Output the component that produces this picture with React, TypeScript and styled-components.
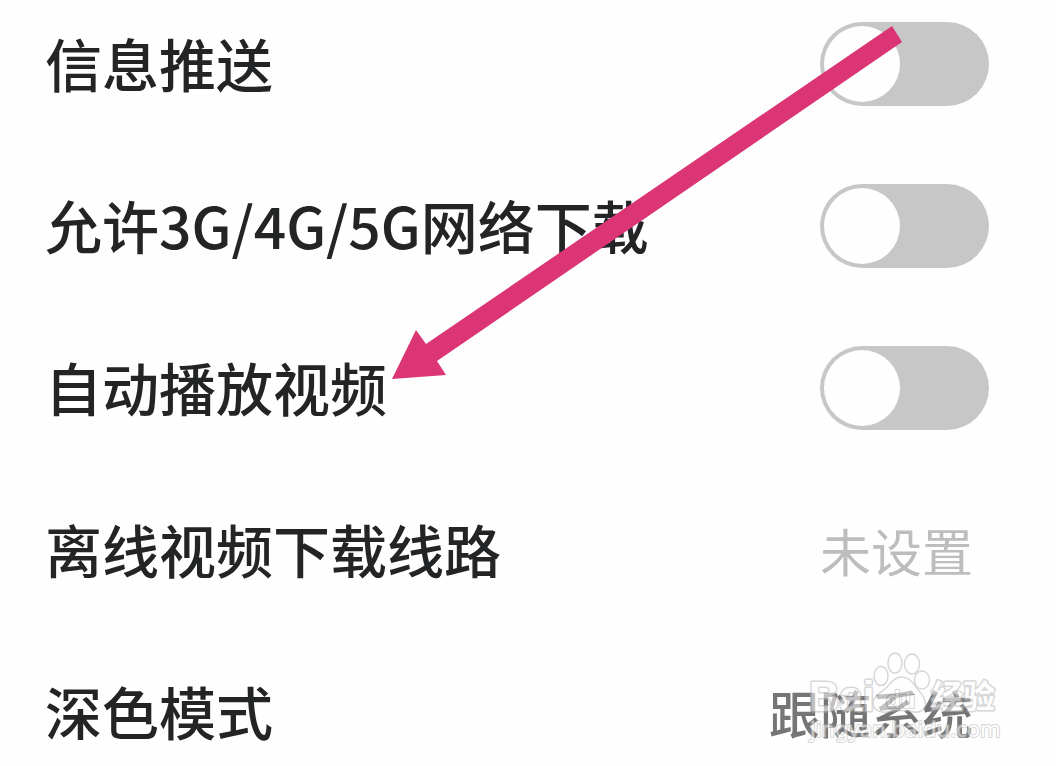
import React, { useState } from "react";
import styled, { createGlobalStyle } from "styled-components";

const GlobalStyle = createGlobalStyle`
  * { box-sizing: border-box; }
  body {
    margin: 0;
    background: #fefefe;
    font-family: "Noto Sans CJK SC", sans-serif;
  }
`;

const Page = styled.main`
  position: relative;
  overflow: hidden;
`;

const SettingsList = styled.div`
  display: flex;
  flex-direction: column;
  gap: 78px;
  padding: 22px 67px 12px 45px;
`;

const Row = styled.div`
  display: flex;
  align-items: center;
  justify-content: space-between;
  height: 84px;
`;

const Label = styled.label`
  padding-bottom: 4px;
  font-size: 57px;
  line-height: 80px;
  font-weight: 500;
  color: #222426;
  white-space: nowrap;
`;

const LinkRow = styled.button`
  display: flex;
  align-items: center;
  justify-content: space-between;
  width: 100%;
  height: 84px;
  padding: 0 16px 0 0;
  border: 0;
  background: none;
  font-family: inherit;
  cursor: pointer;
`;

const Title = styled(Label).attrs({ as: "span" })``;

const Value = styled.span<{ $muted?: boolean }>`
  font-size: 51px;
  line-height: 84px;
  font-weight: ${(p) => (p.$muted ? 400 : 500)};
  color: ${(p) => (p.$muted ? "#bdbdbd" : "#757575")};
  white-space: nowrap;
`;

const Switch = styled.input.attrs({ type: "checkbox", role: "switch" })`
  appearance: none;
  display: flex;
  flex: none;
  width: 169px;
  height: 84px;
  margin: 0;
  padding: 4px;
  border-radius: 42px;
  background: #c7c7c7;
  cursor: pointer;

  &::before {
    content: "";
    width: 76px;
    height: 76px;
    border-radius: 50%;
    background: #fefefe;
  }

  &:checked {
    justify-content: flex-end;
    background: #db3575;
  }
`;

const Arrow = styled.svg`
  position: absolute;
  top: 0;
  left: 0;
  pointer-events: none;
`;

const Watermark = styled.svg`
  position: absolute;
  right: 52px;
  bottom: 16px;
  pointer-events: none;
`;

const Brand = styled.text`
  paint-order: stroke;
  font-family: "Liberation Sans", "Noto Sans CJK SC", sans-serif;
  font-weight: 700;
`;

const Address = styled.text`
  paint-order: stroke;
  font-family: "Noto Sans", sans-serif;
  font-size: 22px;
`;

function ToggleRow({ id, label }: { id: string; label: string }) {
  const [on, setOn] = useState(false);
  return (
    <Row>
      <Label htmlFor={id}>{label}</Label>
      <Switch id={id} checked={on} onChange={() => setOn(!on)} />
    </Row>
  );
}

function ValueRow({ label, value, muted }: { label: string; value: string; muted?: boolean }) {
  return (
    <LinkRow type="button">
      <Title>{label}</Title>
      <Value $muted={muted}>{value}</Value>
    </LinkRow>
  );
}

export default function App() {
  return (
    <>
      <GlobalStyle />
      <Page>
        <SettingsList>
          <ToggleRow id="push" label="信息推送" />
          <ToggleRow id="mobile-data" label="允许3G/4G/5G网络下载" />
          <ToggleRow id="autoplay" label="自动播放视频" />
          <ValueRow label="离线视频下载线路" value="未设置" muted />
          <ValueRow label="深色模式" value="跟随系统" />
        </SettingsList>
        <Arrow width="910" height="390" viewBox="0 0 910 390" aria-hidden="true">
          <path d="M892 26 L902 42 L437 361 L446 375 L392 379 L416 330 L426 344 Z" fill="#db3575" />
        </Arrow>
        <Watermark width="200" height="100" viewBox="804 650 200 100" aria-hidden="true">
          <g fill="#ffffff" stroke="#b8b8b8" strokeWidth="3" strokeLinejoin="round" opacity="0.55">
            <g strokeWidth="1.5">
              <ellipse cx="881" cy="676" rx="7" ry="9.5" />
              <ellipse cx="895" cy="663" rx="7" ry="10" />
              <ellipse cx="912" cy="664" rx="7.5" ry="10" />
              <ellipse cx="922" cy="680" rx="7.5" ry="9" />
              <path d="M902 677 C894 677 891 683 886 688 C880 693 873 697 873 703 C873 710 880 713 887 712 C898 710 906 710 914 712 C922 713 927 708 925 701 C924 695 919 692 916 687 C912 682 909 677 902 677 Z" />
            </g>
            <Brand x="809" y="711" fontSize="42">Bai</Brand>
            <Brand x="886" y="708" fontSize="24" strokeWidth="2">du</Brand>
            <Brand x="931" y="708" fontSize="32">经验</Brand>
            <Address x="810" y="737" strokeWidth="2">jingyan.baidu.com</Address>
          </g>
        </Watermark>
      </Page>
    </>
  );
}
